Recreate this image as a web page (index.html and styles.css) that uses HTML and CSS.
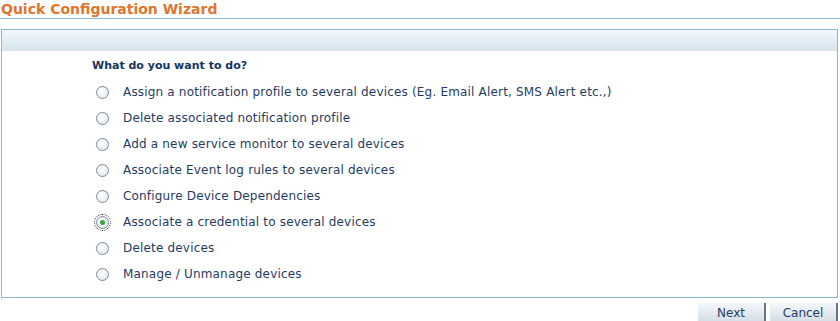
FILE: index.html
```html
<!DOCTYPE html>
<html lang="en">
<head>
    <meta charset="UTF-8">
    <title>Quick Configuration Wizard</title>
    <link rel="stylesheet" href="styles.css">
</head>
<body>
    <div class="page-title">Quick Configuration Wizard</div>

    <div class="wizard-box">
        <div class="wizard-head"></div>
        <div class="wizard-body">
            <div class="question">What do you want to do?</div>
            <ul class="options">
                <li><span class="radio"></span>Assign a notification profile to several devices (Eg. Email Alert, SMS Alert etc.,)</li>
                <li><span class="radio"></span>Delete associated notification profile</li>
                <li><span class="radio"></span>Add a new service monitor to several devices</li>
                <li><span class="radio"></span>Associate Event log rules to several devices</li>
                <li><span class="radio"></span>Configure Device Dependencies</li>
                <li><span class="radio checked"></span>Associate a credential to several devices</li>
                <li><span class="radio"></span>Delete devices</li>
                <li><span class="radio"></span>Manage / Unmanage devices</li>
            </ul>
        </div>
    </div>

    <div class="buttons">
        <button class="btn">Next</button>
        <button class="btn">Cancel</button>
    </div>
</body>
</html>
```

FILE: styles.css
```css
body {
    margin: 0;
    font-family: 'DejaVu Sans', Verdana, sans-serif;
    font-size: 12px;
    color: #1f3b64;
    background: #fff;
}
.page-title {
    color: #e0742c;
    font-size: 14px;
    font-weight: bold;
    height: 18px;
    line-height: 18px;
    padding-left: 1px;
    border-bottom: 1px solid #8db6d5;
}
.wizard-box {
    margin: 10px 2px 0 1px;
    border: 1px solid #8db6d5;
    height: 267px;
}
.wizard-head {
    height: 20px;
    background: linear-gradient(#f3f8fc, #d6e5ef);
    border-bottom: 1px solid #e0e0e0;
}
.wizard-body {
    padding: 8px 0 0 90px;
}
.question {
    font-weight: bold;
    font-size: 11px;
    color: #14355f;
    margin-bottom: 7px;
}
.options {
    list-style: none;
    margin: 0;
    padding: 0;
}
.options li {
    height: 26px;
    display: flex;
    align-items: center;
    letter-spacing: 0.18px;
}
.radio {
    width: 11px;
    height: 11px;
    border: 1px solid #7b8a9b;
    border-radius: 50%;
    background: radial-gradient(circle at 40% 40%, #fff, #dde2e8);
    margin: 0 14px 0 4px;
    position: relative;
    flex-shrink: 0;
}
.radio.checked::after {
    content: "";
    position: absolute;
    left: 3px;
    top: 3px;
    width: 5px;
    height: 5px;
    border-radius: 50%;
    background: #3aa83a;
}
.radio.checked {
    outline: 1px dotted #333;
    outline-offset: 1px;
}
.buttons {
    display: flex;
    justify-content: flex-end;
    gap: 4px;
    margin: 5px 2px 0 0;
}
.btn {
    font-family: 'DejaVu Sans', Verdana, sans-serif;
    font-size: 12px;
    color: #1f3b64;
    width: 68px;
    height: 19px;
    padding: 0;
    border: none;
    border-right: 2px solid #6b7684;
    background: linear-gradient(#f4f7fa, #d3dde6);
}
```
